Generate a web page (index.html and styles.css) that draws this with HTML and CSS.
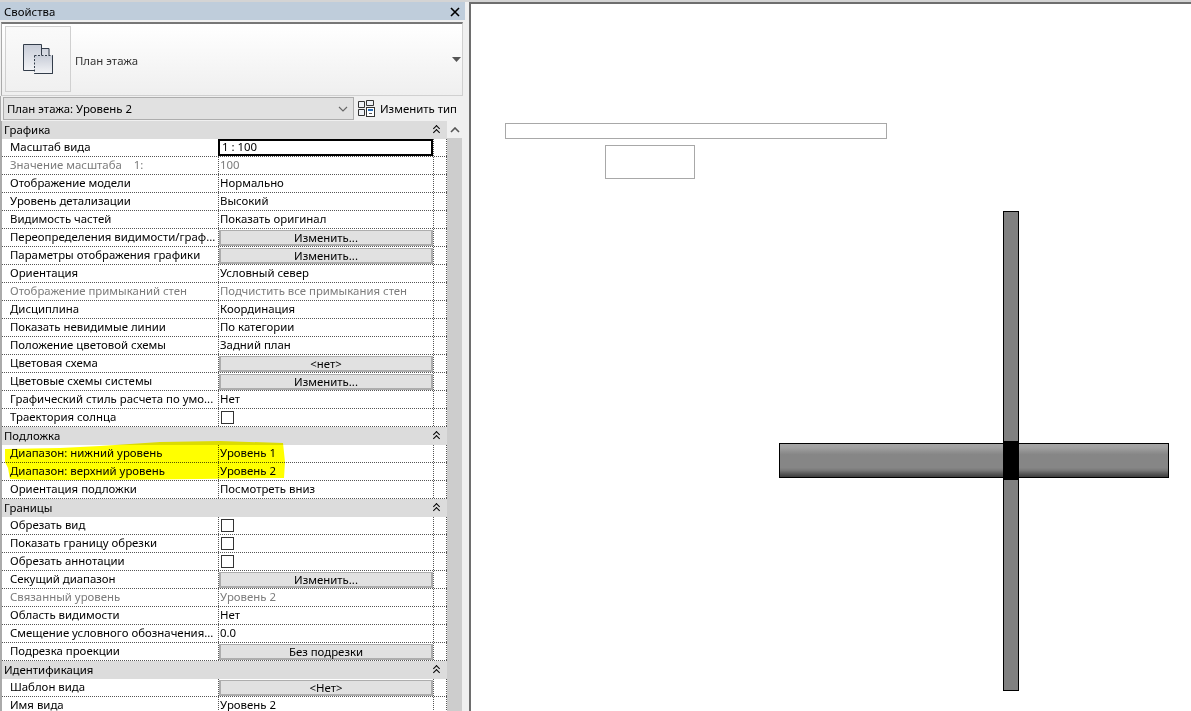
FILE: index.html
```html
<!DOCTYPE html>
<html lang="ru">
<head>
<meta charset="utf-8">
<title>Свойства</title>
<link rel="stylesheet" href="styles.css">
</head>
<body>
<div class="app">
  <aside class="panel">
    <header class="title"><span>Свойства</span>
      <svg class="close" width="10" height="10" viewBox="0 0 10 10"><path d="M1 1l8 8M9 1l-8 8" stroke="#000" stroke-width="1.6" fill="none"/></svg>
    </header>
    <div class="type">
      <div class="thumb">
        <svg width="32" height="32" viewBox="0 0 32 32">
          <defs><linearGradient id="g" x1="0" y1="0" x2="0" y2="1"><stop offset="0" stop-color="#c8cdd8"/><stop offset="1" stop-color="#f2f3f6"/></linearGradient></defs>
          <path d="M1.5 1.5h18v4h8v7h-8v15h-18z" fill="url(#g)"/>
          <path d="M19.500 12.500V1.500h-18v26h11M19.500 5.500h7.500v7" fill="none" stroke="#333d4a" stroke-width="1"/>
          <rect x="12.500" y="12.500" width="18" height="18" fill="url(#g)" stroke="#333d4a" stroke-dasharray="2 1.500"/>
          <path d="M12.500 30.500h18v-18" fill="none" stroke="#333d4a"/>
        </svg>
      </div>
      <span class="type-name">План этажа</span>
      <svg class="drop" width="9" height="5" viewBox="0 0 9 5"><path d="M0 0h9L4.500 5z" fill="#555"/></svg>
    </div>
    <div class="selector">
      <div class="select"><span>План этажа: Уровень 2</span>
        <svg width="10" height="6" viewBox="0 0 10 6"><path d="M1 1l4 4 4-4" fill="none" stroke="#666" stroke-width="1.100"/></svg>
      </div>
      <div class="edit-type">
        <svg width="17" height="17" viewBox="0 0 17 17">
          <path d="M.5 1.500h6v6h-6zM8.500.5h7v5h-7zM.5 9.500h6v6h-6z" fill="#eef1f5" stroke="#333"/>
          <rect x="8.500" y="7.500" width="8" height="9" fill="#fff" stroke="#333"/>
          <rect x="10" y="9" width="5" height="2" fill="#2f6fb5"/>
          <path d="M11 13.500h3" stroke="#555"/>
        </svg>
        <span>Изменить тип</span>
      </div>
    </div>
    <div class="body">
      <div class="table">
        <div class="group">Графика<i class="fold"></i></div>
        <div class="row"><div class="k">Масштаб вида</div><div class="v v-active">1 : 100</div><div class="x"></div></div>
        <div class="row dim"><div class="k">Значение масштаба&nbsp;&nbsp;&nbsp; 1:</div><div class="v">100</div><div class="x"></div></div>
        <div class="row"><div class="k">Отображение модели</div><div class="v">Нормально</div><div class="x"></div></div>
        <div class="row"><div class="k">Уровень детализации</div><div class="v">Высокий</div><div class="x"></div></div>
        <div class="row"><div class="k">Видимость частей</div><div class="v">Показать оригинал</div><div class="x"></div></div>
        <div class="row"><div class="k">Переопределения видимости/граф...</div><div class="v"><button class="btn">Изменить...</button></div><div class="x"></div></div>
        <div class="row"><div class="k">Параметры отображения графики</div><div class="v"><button class="btn">Изменить...</button></div><div class="x"></div></div>
        <div class="row"><div class="k">Ориентация</div><div class="v">Условный север</div><div class="x"></div></div>
        <div class="row dim"><div class="k">Отображение примыканий стен</div><div class="v">Подчистить все примыкания стен</div><div class="x"></div></div>
        <div class="row"><div class="k">Дисциплина</div><div class="v">Координация</div><div class="x"></div></div>
        <div class="row"><div class="k">Показать невидимые линии</div><div class="v">По категории</div><div class="x"></div></div>
        <div class="row"><div class="k">Положение цветовой схемы</div><div class="v">Задний план</div><div class="x"></div></div>
        <div class="row"><div class="k">Цветовая схема</div><div class="v"><button class="btn">&lt;нет&gt;</button></div><div class="x"></div></div>
        <div class="row"><div class="k">Цветовые схемы системы</div><div class="v"><button class="btn">Изменить...</button></div><div class="x"></div></div>
        <div class="row"><div class="k">Графический стиль расчета по умо...</div><div class="v">Нет</div><div class="x"></div></div>
        <div class="row"><div class="k">Траектория солнца</div><div class="v"><i class="check"></i></div><div class="x"></div></div>
        <div class="group">Подложка<i class="fold"></i></div>
        <div class="row"><div class="k">Диапазон: нижний уровень</div><div class="v">Уровень 1</div><div class="x"></div></div>
        <div class="row"><div class="k">Диапазон: верхний уровень</div><div class="v">Уровень 2</div><div class="x"></div></div>
        <div class="row"><div class="k">Ориентация подложки</div><div class="v">Посмотреть вниз</div><div class="x"></div></div>
        <div class="group">Границы<i class="fold"></i></div>
        <div class="row"><div class="k">Обрезать вид</div><div class="v"><i class="check"></i></div><div class="x"></div></div>
        <div class="row"><div class="k">Показать границу обрезки</div><div class="v"><i class="check"></i></div><div class="x"></div></div>
        <div class="row"><div class="k">Обрезать аннотации</div><div class="v"><i class="check"></i></div><div class="x"></div></div>
        <div class="row"><div class="k">Секущий диапазон</div><div class="v"><button class="btn">Изменить...</button></div><div class="x"></div></div>
        <div class="row dim"><div class="k">Связанный уровень</div><div class="v">Уровень 2</div><div class="x"></div></div>
        <div class="row"><div class="k">Область видимости</div><div class="v">Нет</div><div class="x"></div></div>
        <div class="row"><div class="k">Смещение условного обозначения...</div><div class="v">0.0</div><div class="x"></div></div>
        <div class="row"><div class="k">Подрезка проекции</div><div class="v"><button class="btn">Без подрезки</button></div><div class="x"></div></div>
        <div class="group">Идентификация<i class="fold"></i></div>
        <div class="row"><div class="k">Шаблон вида</div><div class="v"><button class="btn">&lt;Нет&gt;</button></div><div class="x"></div></div>
        <div class="row"><div class="k">Имя вида</div><div class="v">Уровень 2</div><div class="x"></div></div>
      </div>
      <div class="scroll">
        <div class="scroll-up"><svg width="10" height="6" viewBox="0 0 10 6"><path d="M1 5l4-4 4 4" fill="none" stroke="#555" stroke-width="1.600"/></svg></div>
        <div class="scroll-track"></div>
      </div>
    </div>
    <svg class="marker" width="300" height="50" viewBox="0 0 300 50"><polygon points="5,9 60,8 100,6 160,2 220,1 283,3 285,22 284,38 200,39 100,40 30,40 10,39 8,28 5,22" fill="#ffff00"/></svg>
  </aside>
  <main class="canvas">
    <div class="shape slab"></div>
    <div class="shape room"></div>
    <div class="wall-v"></div>
    <div class="wall-h"></div>
    <div class="joint"></div>
  </main>
</div>
</body>
</html>
```
FILE: styles.css
```css
* { box-sizing: border-box; }
html, body { margin: 0; height: 100%; overflow: hidden; }
body { background: #f0f0f0; font: 11.4px/18px "Noto Sans", sans-serif; color: #000; }
.app { display: flex; height: 711px; padding-top: 2px; background: linear-gradient(#d4d4d4 2px, #f0f0f0 2px); }
.panel { position: relative; width: 465px; flex: none; overflow: hidden; }
.title { height: 18px; background: #bfcddb; display: flex; align-items: center; justify-content: space-between; padding: 2px 5px 0 4px; }
.type { margin: 2px 0 0 1px; height: 74px; width: 462px; border-top: 2px solid #777; border-left: 1px solid #aaa; border-right: 1px solid #d0d0d0; border-bottom: 1px solid #d0d0d0; background: linear-gradient(#fff, #efefef); display: flex; align-items: center; padding: 1px 1px 3px 3px; gap: 4px; }
.thumb { width: 66px; height: 66px; border: 1px solid #d0d0d0; background: linear-gradient(#fafafa, #f0f0f0); display: flex; align-items: center; justify-content: center; }
.type-name { flex: 1; color: #333; position: relative; top: 2px; }
.drop { margin-right: 0; position: relative; top: 1px; }
.selector { height: 25px; display: flex; align-items: center; padding: 1px 5px 1px 2px; border-left: 1px solid #aaa; }
.select { width: 351px; height: 23px; background: #e1e1e1; border: 1px solid #adadad; display: flex; align-items: center; justify-content: space-between; padding: 0 5px 0 3px; margin-right: 4px; flex: none; }
.edit-type { display: flex; align-items: center; gap: 5px; white-space: nowrap; }
.body { display: flex; border-left: 2px solid #aaa; }
.table { width: 445px; flex: none; }
.group { height: 18px; background: #dcdcdc; padding-left: 2px; display: flex; justify-content: space-between; align-items: center; }
.fold { width: 8px; height: 10px; margin-right: 7px; position: relative; }
.fold::before, .fold::after { content: ""; position: absolute; left: 1.500px; width: 4px; height: 4px; border-left: 1.500px solid #000; border-top: 1.500px solid #000; transform: rotate(45deg); }
.fold::before { top: 1px; }
.fold::after { top: 5px; }
.row { height: 18px; display: grid; grid-template-columns: 216px 215px 14px; background: #fff; border-bottom: 1px dotted #555; }
.k, .v { white-space: nowrap; overflow: hidden; line-height: 16px; }
.k { padding-left: 8px; }
.v { padding-left: 1px; border-left: 1px dotted #555; position: relative; }
.x { border-left: 1px dotted #555; border-right: 1px dotted #555; }
.dim { color: #7c7c7c; }
.v-active { border: 2px solid #000; padding-left: 2px; line-height: 12px; height: 17px; }
.btn { display: block; width: calc(100% + 1px); margin: 1px 0 0 -1px; height: 16px; padding: 0; font: inherit; line-height: 13px; color: #000; text-align: center; background: #e1e1e1; border: 2px solid #adadad; border-width: 1px 2px 2px 2px; }
.check { display: block; width: 13px; height: 13px; margin: 2px 0 0 1px; border: 1px solid #333; background: #fff; }
.scroll { width: 15px; display: flex; flex-direction: column; height: 600px; }
.scroll-up { height: 17px; display: flex; align-items: center; justify-content: center; background: #f0f0f0; }
.scroll-track { flex: 1; background: #cdcdcd; }
.marker { position: absolute; left: 0; top: 438px; mix-blend-mode: multiply; }
.canvas { position: relative; flex: 1; margin-left: 4px; background: #fff; border-left: 2px solid #6e6e6e; border-top: 2px solid #6e6e6e; }
.shape { position: absolute; border: 1.500px solid #a8a8a8; background: #fff; }
.slab { left: 34px; top: 119px; width: 382px; height: 16px; }
.room { left: 134px; top: 141px; width: 90px; height: 34px; }
.wall-v { position: absolute; left: 532px; top: 207px; width: 16px; height: 480px; background: #808080; border: 1px solid #000; }
.wall-h { position: absolute; left: 308px; top: 439px; width: 390px; height: 35px; border: 1px solid #000; background: linear-gradient(#a6a6a6 0, #a0a0a0 12%, #929292 22%, #868686 32%, #868686 72%, #787878 80%, #585858 90%, #3c3c3c 100%); }
.joint { position: absolute; left: 532px; top: 437px; width: 16px; height: 39px; background: #000; }
```
